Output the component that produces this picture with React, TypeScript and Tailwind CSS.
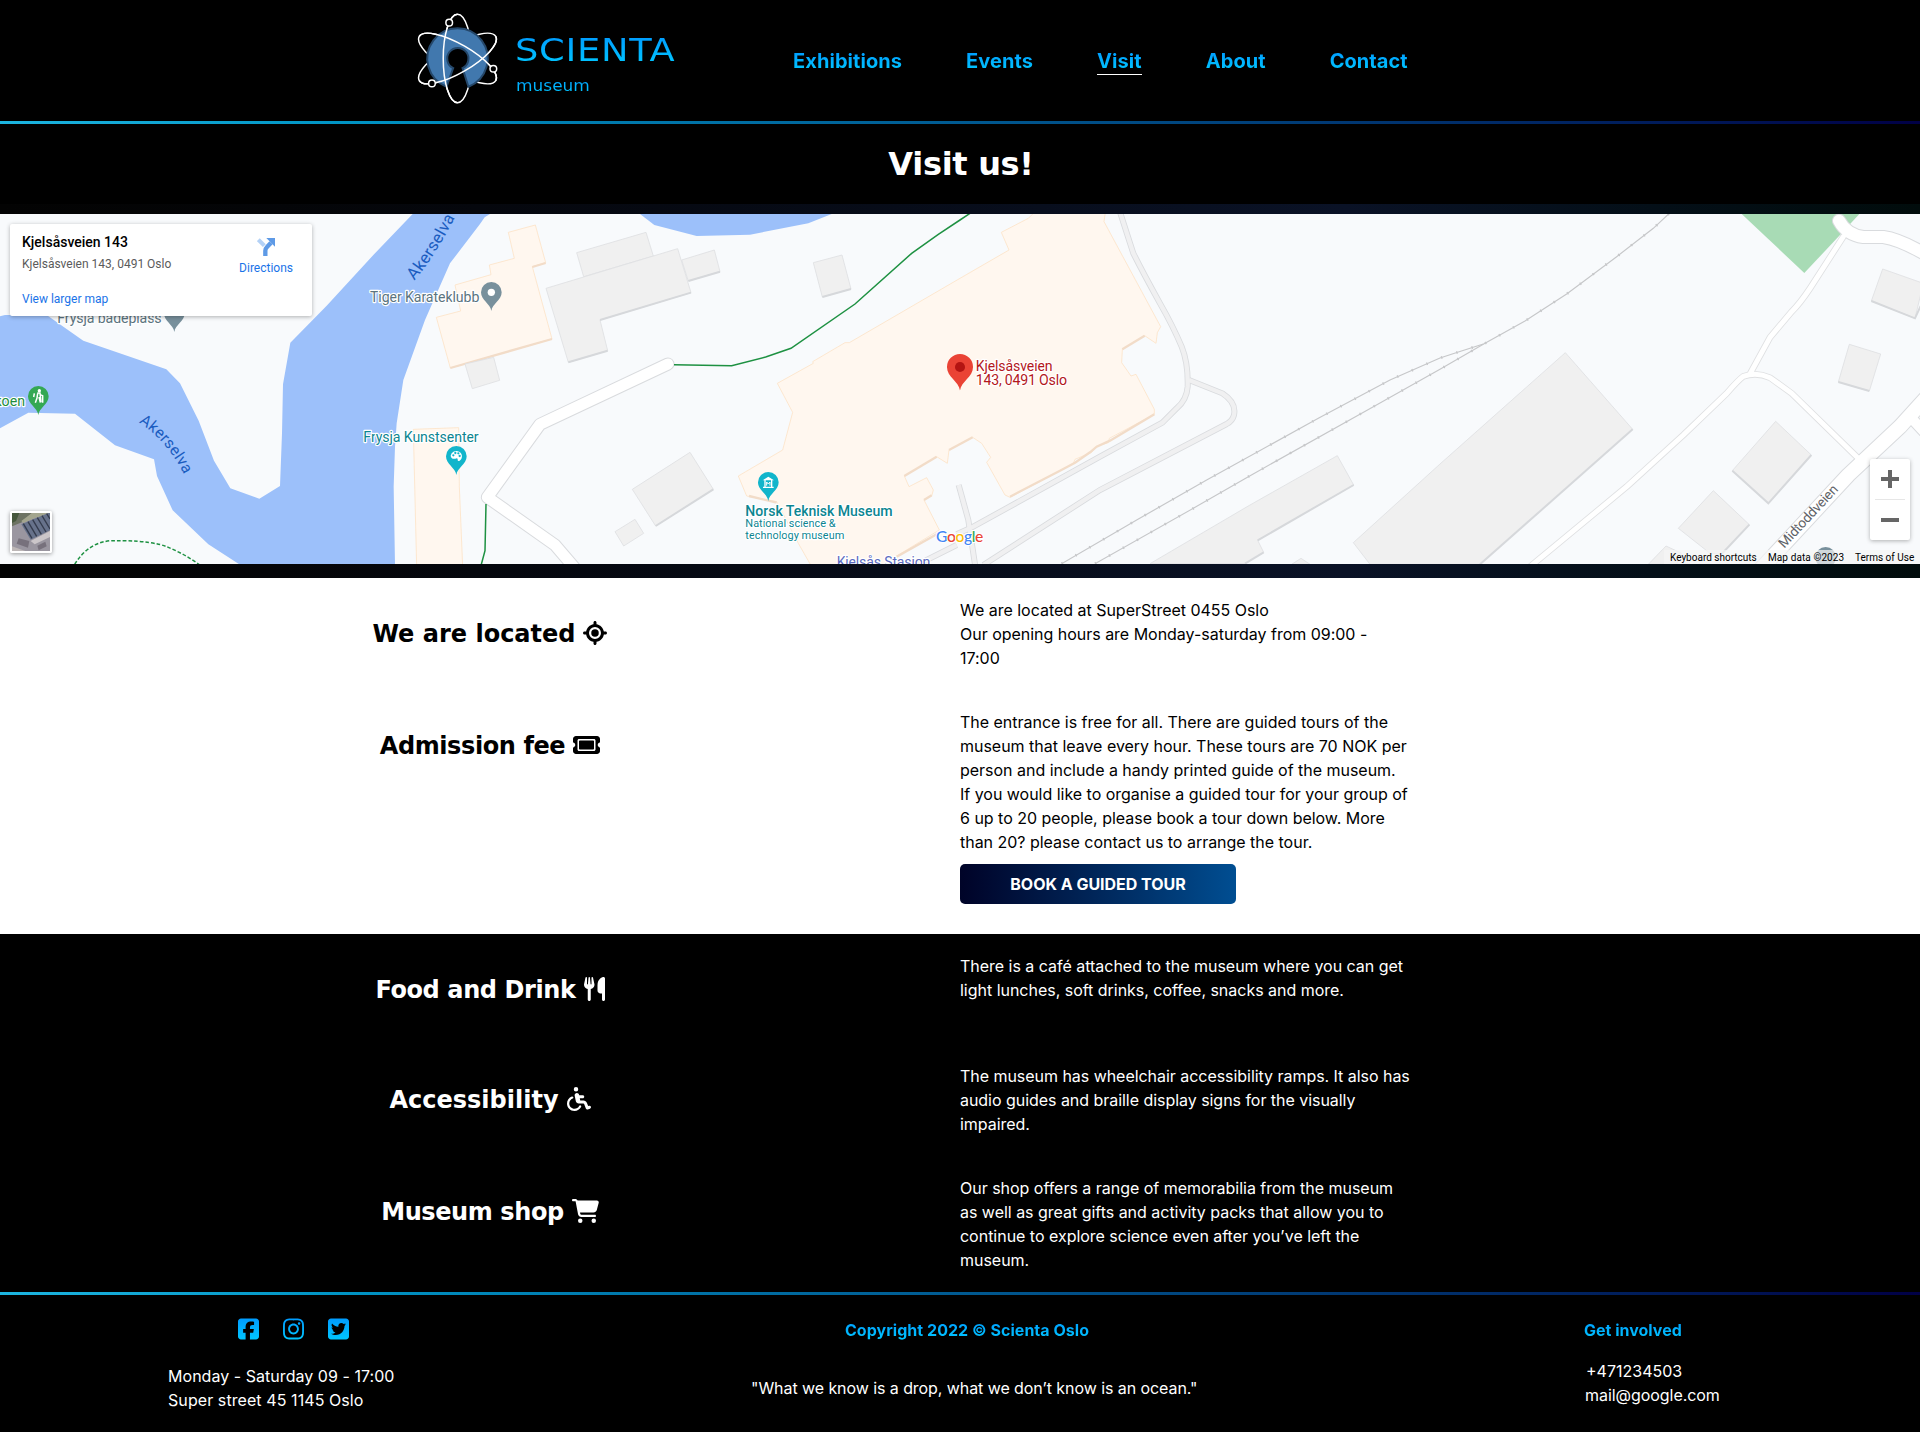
import React from "react";
import {
  FaLocationCrosshairs,
  FaTicket,
  FaUtensils,
  FaWheelchair,
  FaCartShopping,
  FaSquareFacebook,
  FaInstagram,
  FaSquareTwitter,
} from "react-icons/fa6";

const skyText = "bg-gradient-to-b from-[#0096ff] to-[#00ccff] bg-clip-text text-transparent";
const display = "font-['DejaVu_Sans',sans-serif]";

function Atom() {
  return (
    <svg viewBox="50 35 250 280" className="h-[93px] w-[83px]" fill="none" stroke="#fff" strokeWidth="4.5">
      <ellipse cx="172" cy="175" rx="43" ry="133" />
      <ellipse cx="172" cy="175" rx="133" ry="43" transform="rotate(30 172 175)" />
      <ellipse cx="172" cy="175" rx="133" ry="43" transform="rotate(-30 172 175)" />
      <circle cx="172" cy="175" r="92" fill="#000" stroke="none" />
      <path
        d="M205 260 A91 91 0 1 0 139 260 L159 204 A32 32 0 1 1 187 204 Z"
        fill="#4178ae"
        stroke="#25486b"
        strokeWidth="6"
      />
      <path d="M172 42 A43 133 0 0 0 172 308" />
      <path d="M39 175 A133 43 0 0 1 305 175" transform="rotate(30 172 175)" />
      <path d="M39 175 A133 43 0 0 0 305 175" transform="rotate(-30 172 175)" />
      <g fill="#000">
        <circle cx="147" cy="67" r="10" />
        <circle cx="280" cy="206" r="10" />
        <circle cx="95" cy="250" r="10" />
      </g>
    </svg>
  );
}

const nav = ["Exhibitions", "Events", "Visit", "About", "Contact"];

function Header() {
  return (
    <header className="flex h-[121px] bg-black pl-[417px]">
      <div className="pt-[12px]">
        <Atom />
      </div>
      <div className={`w-[276px] pl-[15px] pt-[32px] ${display}`}>
        <div className={`w-fit origin-left scale-x-[1.15] text-[32px] leading-[37px] tracking-[0.6px] ${skyText}`}>SCIENTA</div>
        <div className={`mt-[7px] w-fit origin-left scale-x-[1.06] pl-[1px] text-[16px] leading-[19px] ${skyText}`}>museum</div>
      </div>
      <nav className="flex items-start gap-16 pl-[17px] pt-[49px] text-[20px] font-bold leading-6 tracking-[0.07px]">
        {nav.map((n) => (
          <a key={n} className={n === "Visit" ? "border-b border-white pb-[1px]" : ""}>
            <span className={`block ${skyText}`}>{n}</span>
          </a>
        ))}
      </nav>
    </header>
  );
}

function Rule() {
  return <div className="h-[3px] bg-gradient-to-r from-[#1cb5e0] to-[#000046]" />;
}

function Pin({ x, y, fill, s = 1, children }: { x: number; y: number; fill: string; s?: number; children?: React.ReactNode }) {
  return (
    <g transform={`translate(${x} ${y}) scale(${s})`}>
      <path d="M0 56 C-3 34 -31 24 -31 0 A31 31 0 0 1 31 0 C31 24 3 34 0 56 Z" fill={fill} />
      {children}
    </g>
  );
}

const grey = [
  "1730,158 1938,97 1960,168 1751,230",
  "2045,180 2143,150 2160,215 2065,243",
  "1638,265 2033,146 2073,278 1800,360 1823,452 1705,487",
  "1395,492 1481,472 1499,541 1417,566",
  "2440,188 2526,165 2553,267 2467,291",
  "1897,868 2070,757 2140,868 1967,978",
  "1845,995 1905,958 1931,1000 1871,1038",
  "3450,1091 3750,915 4012,767 4061,855 3773,1021 3791,1057 3735,1091",
  "4060,1028 4320,792 4696,458 4898,688 4440,1093 4110,1093",
  "3875,1093 3903,1075 3930,1093",
  "5648,207 5770,250 5745,355 5614,303",
  "5548,433 5642,462 5608,573 5515,546",
  "5327,664 5434,765 5305,910 5197,812",
  "5140,872 5248,974 5165,1062 5130,1060 5035,985",
  "4945,1093 4998,1038 5045,1060 5030,1093",
];

const greyEdges = [
  "1705,487 1823,452",
  "1800,360 2073,278",
  "2065,243 2160,215",
  "2467,291 2553,267",
  "1967,978 2140,868",
  "3773,1021 4061,855",
  "3735,1091 3791,1057",
  "4440,1093 4898,688",
  "5614,303 5745,355 5762,318",
  "5515,546 5608,573",
  "5197,812 5305,910 5434,765",
  "5165,1062 5248,974",
];

const orangeEdges = [
  "1351,504 1656,417",
  "1597,201 1637,189",
  "2713,828 2810,770",
  "2847,750 2918,712",
  "3367,448 3434,407",
  "3030,890 3180,812 3225,788 3270,757 3290,740 3330,722 3463,643",
  "2690,1070 2818,998",
  "2795,886 2772,900",
  "2247,888 2330,908",
];

const walkways = [
  "M3358 30 L3400 160 Q3430 220 3480 310 Q3520 380 3545 440 Q3565 490 3563 560 Q3560 600 3530 625 L3487 668 L3300 770 L2920 980 L2870 1003",
  "M3567 540 L3667 580 Q3710 608 3702 645 Q3698 662 3680 672 L3300 870 L2950 1095",
  "M2876 855 L2905 960 L2926 1100",
  "M2870 1035 L2740 1100",
];

const lanes = [
  "M4590 1100 L4880 860 L5050 705 L5180 580 Q5215 540 5230 529 Q5270 515 5310 533 L5375 580 L5580 780",
  "M5530 110 L5430 265 Q5400 310 5375 335 L5310 412 L5252 518",
];

const streets: [string, number][] = [
  ["M2004 492 L1620 673 L1462 892 L1665 1035 L1725 1105", 33],
  ["M5517 62 Q5540 105 5590 111 L5650 111 Q5700 118 5780 165", 36],
  ["M5280 1110 L5545 825 L5700 680 L5800 570", 42],
  ["M5735 655 L5790 715", 30],
];

function MapDrawing() {
  return (
    <svg viewBox="0 42 5760 1050" className="block h-[350px] w-[1920px] font-['Roboto',sans-serif]">
      <rect x="0" y="42" width="5760" height="1050" fill="#f8fafc" />
      <g fill="#9cc0fa">
        <path d="M1238 42 L1120 165 L980 317 L871 428 L849 553 L846 700 L840 858 L778 896 L691 865 L642 782 L596 662 L540 550 L499 508 L250 422 L140 345 L15 345 L0 349 V685 L85 638 L225 641 L345 736 L462 778 L471 828 L518 931 L625 1033 L718 1093 H1185 L1181 860 L1185 740 L1190 670 L1210 540 L1275 360 L1350 190 L1440 72 L1454 52 L1470 42 Z" />
        <path d="M1920 42 L1963 75 L2090 108 L2250 104 L2425 70 L2495 42 Z" />
      </g>
      <path d="M5225 42 L5413 219 L5520 105 L5578 42 Z" fill="#a8dbb5" />
      <g fill="#fff7ef" stroke="#fde3c8" strokeWidth="2.5">
        <path d="M1525 97 L1606 75 L1637 188 L1597 200 L1656 417 L1351 504 L1309 352 L1382 333 L1365 255 L1473 224 L1468 195 L1543 175 Z" />
        <path d="M1240 688 L1376 683 L1378 860 L1388 1100 H1250 Z" />
      </g>
      <g fill="none" stroke="#d9dbde" strokeWidth="18">
        {walkways.map((d) => <path key={d} d={d} />)}
      </g>
      <g fill="none" stroke="#f0f0f1" strokeWidth="13">
        {walkways.map((d) => <path key={d} d={d} />)}
      </g>
      <path
        fill="#fff7ef"
        stroke="#fde3c8"
        strokeWidth="2.5"
        d="M2332 550 L2440 490 L2438 485 L2535 428 L2548 428 L2880 235 L3027 150 L3004 97 L3085 55 L3110 30 L3317 30 L3312 65 L3482 380 L3472 398 L3468 430 L3434 407 L3367 448 L3365 488 L3393 528 L3408 523 L3463 628 V643 L3328 715 L3325 728 L3290 738 L3275 757 L3225 778 L3220 790 L3180 812 L3030 892 L3015 885 L2960 787 L2972 772 L2945 730 L2918 712 L2847 750 L2842 790 L2810 770 L2713 828 L2727 860 L2780 833 L2800 870 L2795 888 L2772 900 L2818 990 L2690 1068 L2640 1100 L2435 1100 L2395 1030 L2330 905 L2240 888 L2215 828 L2348 750 L2378 637 Z"
      />
      <g fill="none" stroke="#f2dcc8" strokeWidth="7">
        {orangeEdges.map((p) => <polyline key={p} points={p} />)}
      </g>
      <g fill="#f0f0f0" stroke="#dfe0e2" strokeWidth="2.5">
        {grey.map((p) => <polygon key={p} points={p} />)}
      </g>
      <g fill="none" stroke="#d6d8db" strokeWidth="6">
        {greyEdges.map((p) => <polyline key={p} points={p} />)}
      </g>
      <g fill="none" stroke="#c6c7c9" strokeWidth="3.5">
        <path d="M3185 1091 L3410 960 L3620 840 L3955 655 L4170 540 L4320 474 L4375 456 L4450 432" />
        <path d="M3285 1091 L3580 925 L3745 830 L4120 620 L4320 508 L4455 430 L4575 363 L4700 282 L4850 170 L4960 85 L5008 40" />
        <g strokeWidth="8" strokeDasharray="4 44">
          <path d="M3185 1091 L3410 960 L3620 840 L3955 655 L4170 540 L4320 474 L4375 456 L4450 432" />
          <path d="M3285 1091 L3580 925 L3745 830 L4120 620 L4320 508 L4455 430 L4575 363 L4700 282 L4850 170 L4960 85 L5008 40" />
        </g>
      </g>
      <g fill="none" strokeLinecap="round" strokeLinejoin="round">
        {lanes.map((d) => <path key={d} d={d} stroke="#dfe0e2" strokeWidth="20" />)}
        {streets.map(([d, w]) => <path key={d} d={d} stroke="#d9dbde" strokeWidth={w + 6} />)}
        {lanes.map((d) => <path key={d} d={d} stroke="#fff" strokeWidth="15" />)}
        {streets.map(([d, w]) => <path key={d} d={d} stroke="#fff" strokeWidth={w} />)}
      </g>
      <g fill="none" stroke="#1e9142" strokeWidth="4.5">
        <path d="M2022 494 L2195 497 L2297 471 L2373 445 L2565 312 L2735 160 L2815 103 L2880 60 L2910 40" />
        <path d="M1458 912 L1455 1052 L1444 1093" />
        <path d="M224 1093 Q265 1026 335 1022 L370 1022 Q460 1024 500 1040 Q550 1060 597 1093" strokeDasharray="11 6" />
      </g>

      <Pin x={523} y={340} fill="#78909c" />
      <Pin x={1474} y={277} fill="#78909c"><circle r="11" fill="#fff" /></Pin>
      <Pin x={115} y={589} fill="#34a853">
        <circle cx="3" cy="-17" r="5" fill="#fff" />
        <path d="M-3 -10 L5 -10 L8 18 M-2 -8 L-4 5 L-9 19 M2 2 L6 19 M5 -5 L13 -2 V19 M-12 -9 L-14 2" stroke="#fff" strokeWidth="4.5" fill="none" />
      </Pin>
      <Pin x={1369} y={769} fill="#12b5cb">
        <path d="M-17 -2 A17 16 0 1 1 10 13 Q3 17 4 9 Q4 4 -3 7 Q-16 9 -17 -2 Z" fill="#fff" />
        <g fill="#12b5cb"><circle cx="-9" cy="-3" r="3.4" /><circle cx="-3" cy="-10" r="3.4" /><circle cx="6" cy="-9" r="3.4" /><circle cx="10" cy="-1" r="3.4" /></g>
      </Pin>
      <Pin x={2305} y={847} fill="#12b5cb">
        <path d="M-17 -6 L0 -17 L17 -6 Z M-16 13 H16 V17 H-16 Z M-12 -6 H-8 V14 H-12 Z M8 -6 H12 V14 H8 Z" fill="#fff" />
        <path d="M-5 10 V-1 L0 5 L5 -1 V10" stroke="#fff" strokeWidth="3" fill="none" />
      </Pin>
      <Pin x={2880} y={501} fill="#ea4335" s={1.26}><circle r="12" fill="#b31412" /></Pin>
      <Pin x={5477} y={1072} fill="#78909c" />

      <g fontSize="42.5" stroke="#fff" strokeWidth="7" strokeLinejoin="round" paintOrder="stroke">
        <text x="172" y="370" textLength="313" fill="#5b7480">Frysja badeplass</text>
        <text x="1110" y="306" textLength="328" fill="#5b7480">Tiger Karateklubb</text>
        <text x="75" y="618" textAnchor="end" fill="#1e8e3e">koen</text>
        <text x="1090" y="727" textLength="346" fill="#0c8591">Frysja Kunstsenter</text>
        <text x="2236" y="948" textLength="442" fontWeight="500" fill="#0c8591">Norsk Teknisk Museum</text>
        <text x="2236" y="982" textLength="271" fontSize="33" fill="#0c8591">National science &amp;</text>
        <text x="2236" y="1016" textLength="297" fontSize="33" fill="#0c8591">technology museum</text>
        <text x="2510" y="1101" textLength="281" fill="#5c6bc0">Kjelsås Stasjon</text>
        <text x="2927" y="513" textLength="231" fill="#b3171c">Kjelsåsveien</text>
        <text x="2927" y="555" textLength="274" fill="#b3171c">143, 0491 Oslo</text>
      </g>
      <path id="river-north" d="M1243 242 Q1306 168 1366 50" fill="none" />
      <path id="river-south" d="M416 667 Q496 718 551 820" fill="none" />
      <path id="street-name" d="M5353 1046 L5524 862" fill="none" />
      <g fontSize="50">
        <text fill="#1a5cc0"><textPath href="#river-north" textLength="226">Akerselva</textPath></text>
        <text fill="#1a5cc0" fontSize="47"><textPath href="#river-south" textLength="210">Akerselva</textPath></text>
        <text fill="#5f6368" fontSize="41"><textPath href="#street-name" textLength="240">Midtoddveien</textPath></text>
      </g>
      <text x="2808" y="1026" textLength="142" fontSize="47" fontWeight="500" fontFamily="Lato, sans-serif" stroke="#fff" strokeWidth="6" paintOrder="stroke">
        <tspan fill="#4285f4">G</tspan><tspan fill="#ea4335">o</tspan><tspan fill="#fbbc05">o</tspan><tspan fill="#4285f4">g</tspan><tspan fill="#34a853">l</tspan><tspan fill="#ea4335">e</tspan>
      </text>
    </svg>
  );
}

function MapPanel() {
  return (
    <section className="h-[374px] bg-gradient-to-r from-[#030303] via-[#0a1226] via-70% to-[#010c0c] pt-[10px]">
      <div className="relative h-[350px] overflow-hidden font-['Roboto',sans-serif]">
        <MapDrawing />
        <div className="absolute left-[10px] top-[10px] flex h-[92px] w-[302px] justify-between rounded-[2px] bg-white pl-3 pr-[19px] shadow-[0_1px_4px_rgba(0,0,0,0.3)]">
          <div>
            <div className="mt-[10px] text-[14px] font-medium leading-4 text-black">Kjelsåsveien 143</div>
            <div className="mt-[6px] text-[12px] leading-4 text-[#5b5b5b]">Kjelsåsveien 143, 0491 Oslo</div>
            <div className="mt-[19px] text-[12px] leading-4 text-[#1a73e8]">View larger map</div>
          </div>
          <div className="flex flex-col items-center pt-[14px]">
            <svg viewBox="0 0 54 54" className="h-[18px] w-[18px]">
              <path d="M4 5 L22 23" stroke="#b3d1f6" strokeWidth="12" />
              <path d="M25 54 V38 Q25 32 30 27 L42 14" stroke="#5e9ae6" strokeWidth="13" fill="none" />
              <path d="M28 0 H54 V26 Z" fill="#5e9ae6" />
            </svg>
            <div className="mt-[4px] text-[12px] leading-4 text-[#1a73e8]">Directions</div>
          </div>
        </div>
        <div className="absolute left-[10px] top-[297px] h-[42px] w-[42px] rounded-[2px] border-2 border-white shadow-[0_1px_4px_rgba(0,0,0,0.4)]">
          <svg viewBox="0 0 114 114" className="h-[38px] w-[38px]">
            <rect width="114" height="114" fill="#9a96a0" />
            <path d="M0 0 H60 L30 28 L0 40 Z" fill="#6d7363" />
            <path d="M0 0 H22 L12 24 L0 30 Z" fill="#47583d" />
            <path d="M60 0 H114 V6 L70 14 L34 30 L28 24 Z" fill="#a3a58e" />
            <path d="M28 34 L114 -2 V52 L56 80 Z" fill="#67728b" />
            <path d="M34 32 L60 76 M48 26 L74 70 M62 20 L88 64 M76 14 L102 57 M90 8 L114 48 M104 2 L114 18" stroke="#343b4d" strokeWidth="4" />
            <path d="M56 84 L114 54 V72 L68 94 Z" fill="#cbc6c9" />
            <path d="M20 76 L52 84 L48 104 L14 92 Z M76 98 L100 86 L104 100 L80 112 Z" fill="#77717c" />
            <path d="M0 100 L40 114 H0 Z" fill="#bdb7b7" />
          </svg>
        </div>
        <div className="absolute right-[10px] top-[245px] flex h-[81px] w-[40px] flex-col items-center rounded-[2px] bg-white shadow-[0_1px_4px_rgba(0,0,0,0.3)]">
          <svg viewBox="0 0 18 18" className="mt-[11px] h-[18px] w-[18px]">
            <path d="M0 9 H18 M9 0 V18" stroke="#666" strokeWidth="4" />
          </svg>
          <div className="mt-[11px] h-px w-[30px] bg-[#e6e6e6]" />
          <div className="mt-[18px] h-[4px] w-[18px] bg-[#666]" />
        </div>
        <div className="absolute bottom-0 right-0 flex h-[14px] items-center gap-[12px] bg-[#f5f5f5]/70 pl-[6px] pr-[6px] pt-px text-[10px] leading-[14px] text-black">
          <span className="w-[86px] whitespace-nowrap">Keyboard shortcuts</span>
          <span className="w-[75px] whitespace-nowrap tracking-[0.1px]">Map data ©2023</span>
          <span className="w-[59px] whitespace-nowrap">Terms of Use</span>
        </div>
      </div>
    </section>
  );
}

function Row({ title, icon, children }: { title: React.ReactNode; icon: React.ReactNode; children: React.ReactNode }) {
  return (
    <div className="grid grid-cols-2">
      <h2 className={`pl-5 pt-px text-center text-[24px] font-bold leading-[70px] ${display}`}>
        {title}
        {icon}
      </h2>
      <div className="text-[16px] leading-6 tracking-[-0.02px]">{children}</div>
    </div>
  );
}

const ico = "ml-[8px] inline-block align-[-0.125em]";

function Footer() {
  return (
    <footer className="flex h-[137px] bg-black text-[16px] leading-6 text-white">
      <div className="w-[751px] pl-[168px] pt-[22px]">
        <div className="flex gap-6 pl-[70px] text-[24px]">
          <FaSquareFacebook className="w-[21px] fill-[url(#sky)]" />
          <FaInstagram className="w-[21px] fill-[url(#sky)]" />
          <FaSquareTwitter className="w-[21px] fill-[url(#sky)]" />
        </div>
        <p className="mt-[23px] tracking-[0.04px]">Monday - Saturday 09 - 17:00</p>
        <p className="tracking-[0.08px]">Super street 45 1145 Oslo</p>
      </div>
      <div className="w-[834px] pt-[23px]">
        <p className={`ml-[94px] w-fit font-bold tracking-[0.03px] ${skyText}`}>Copyright 2022 © Scienta Oslo</p>
        <p className="mt-[34px] tracking-[-0.07px]">"What we know is a drop, what we don’t know is an ocean."</p>
      </div>
      <div className="pt-[23px]">
        <p className={`-ml-px w-fit font-bold ${skyText}`}>Get involved</p>
        <p className="mt-[17px] pl-px">+471234503</p>
        <p className="tracking-[-0.05px]">mail@google.com</p>
      </div>
    </footer>
  );
}

export default function App() {
  return (
    <div className="w-[1920px] bg-black font-['Inter',sans-serif]">
      <svg className="absolute h-0 w-0">
        <linearGradient id="sky" x1="0" y1="0" x2="0" y2="1">
          <stop offset="0" stopColor="#009cff" />
          <stop offset="1" stopColor="#00c6ff" />
        </linearGradient>
      </svg>
      <Header />
      <Rule />
      <h1 className={`h-[80px] pl-[2px] pt-[21px] text-center text-[32px] font-bold leading-[38px] tracking-[-0.3px] text-white ${display}`}>
        Visit us!
      </h1>
      <MapPanel />
      <section className="flex h-[356px] flex-col gap-10 bg-white pt-5 text-black">
        <div className="h-[72px]">
          <Row title="We are located" icon={<FaLocationCrosshairs className={ico} />}>
            <p className="w-[450px]">
              We are located at SuperStreet 0455 Oslo
              <br />
              Our opening hours are Monday-saturday from 09:00 - 17:00
            </p>
          </Row>
        </div>
        <Row title={<span className="tracking-[-0.4px]">Admission fee</span>} icon={<FaTicket className={`${ico} w-[27px]`} />}>
          <p className="w-[450px]">
            The entrance is free for all. There are guided tours of the museum that leave every hour. These tours are 70
            NOK per person and include a handy printed guide of the museum.
            <br />
            If you would like to organise a guided tour for your group of 6 up to 20 people, please book a tour down
            below. More than 20? please contact us to arrange the tour.
          </p>
          <button className="mt-[10px] h-10 w-[276px] rounded-[5px] bg-gradient-to-r from-[#000428] to-[#004e92] font-bold text-white">
            BOOK A GUIDED TOUR
          </button>
        </Row>
      </section>
      <section className="flex h-[358px] flex-col gap-10 bg-black pt-5 text-white">
        <div className="h-[70px]">
          <Row title={<span className="tracking-[-0.4px]">Food and Drink</span>} icon={<FaUtensils className={`${ico} w-[21px]`} />}>
            <p className="w-[450px]">
              There is a café attached to the museum where you can get light lunches, soft drinks, coffee, snacks and
              more.
            </p>
          </Row>
        </div>
        <div className="h-[72px]">
          <Row title="Accessibility" icon={<FaWheelchair className={ico} />}>
            <p className="w-[455px] tracking-[-0.04px]">
              The museum has wheelchair accessibility ramps. It also has audio guides and braille display signs for the
              visually impaired.
            </p>
          </Row>
        </div>
        <Row title={<span className="tracking-[-0.4px]">Museum shop</span>} icon={<FaCartShopping className={`${ico} w-[27px]`} />}>
          <p className="w-[450px]">
            Our shop offers a range of memorabilia from the museum as well as great gifts and activity packs that allow
            you to continue to explore science even after you’ve left the museum.
          </p>
        </Row>
      </section>
      <Rule />
      <Footer />
    </div>
  );
}
